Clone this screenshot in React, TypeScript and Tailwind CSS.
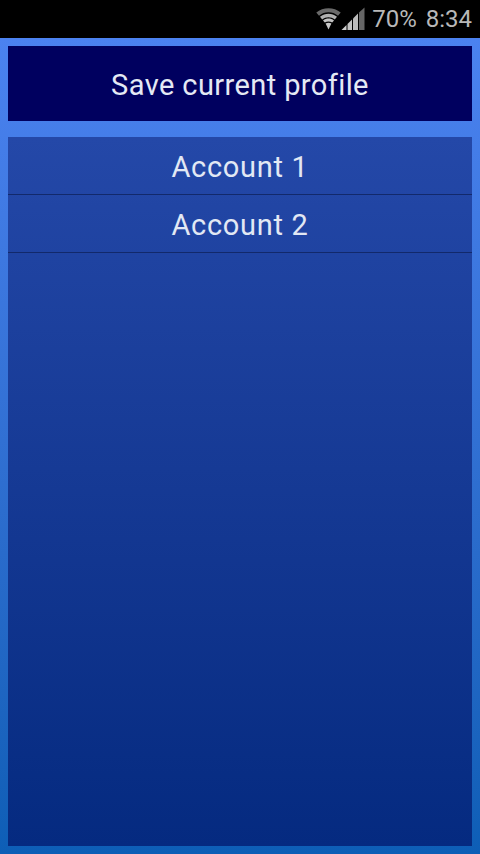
const accounts = ["Account 1", "Account 2"];

function WifiIcon() {
  return (
    <svg width="25" height="24" viewBox="0 0 25 24" className="block">
      <path d="M0.3 5.6C7 -0.2 18 -0.2 24.7 5.6L22 8.8C16.4 4.2 8.6 4.2 3 8.8Z" fill="#6a6a6a" />
      <path d="M4 9.8C9 5.8 16 5.8 21 9.8L18.8 12.4C15 9.6 10 9.6 6.2 12.4Z" fill="#b0b0b0" />
      <path d="M7 13.4C10.4 11 14.6 11 18 13.4L16.2 15.6C14 14.2 11 14.2 8.8 15.6Z" fill="#c4c4c4" />
      <path d="M9.6 16.6C11.4 15.6 13.6 15.6 15.4 16.6L12.5 22.4Z" fill="#c8c8c8" />
    </svg>
  );
}

function SignalIcon() {
  return (
    <svg width="24" height="24" viewBox="0 0 24 24" className="block">
      <path d="M0.5 23L5.5 18V23Z" fill="#d0d0d0" />
      <path d="M6.5 17L11 12.5V23H6.5Z" fill="#c4c4c4" />
      <path d="M12 11.5L17 6.5V23H12Z" fill="#bcbcbc" />
      <path d="M18 5.5L23.5 0.5V23H18Z" fill="#666666" />
    </svg>
  );
}

export default function App() {
  return (
    <div className="w-[480px] h-[854px] flex flex-col overflow-hidden font-['Roboto',sans-serif]">
      <div className="h-[38px] shrink-0 bg-black flex items-center justify-end pr-[8px] text-[24px] text-[#b8b8b8]">
        <div className="flex items-center mr-[7px]">
          <WifiIcon />
          <SignalIcon />
        </div>
        <span className="mr-[9px]">70%</span>
        <span>8:34</span>
      </div>

      <div className="flex-1 flex flex-col p-2 gap-4 bg-gradient-to-b from-[#4b82f0] to-[#0d5eb6]">
        <button className="h-[75px] shrink-0 pt-1 bg-[#00005f] text-[#e4e9f4] text-[29px] tracking-[0.4px]">
          Save current profile
        </button>

        <div className="flex-1 bg-gradient-to-b from-[#2448a8] to-[#052a80]">
          {accounts.map((name) => (
            <div
              key={name}
              className="h-[58px] pt-1 flex items-center justify-center border-b border-[#12296b] text-[#e2e8f4] text-[29px] tracking-[0.7px]"
            >
              {name}
            </div>
          ))}
        </div>
      </div>
    </div>
  );
}
